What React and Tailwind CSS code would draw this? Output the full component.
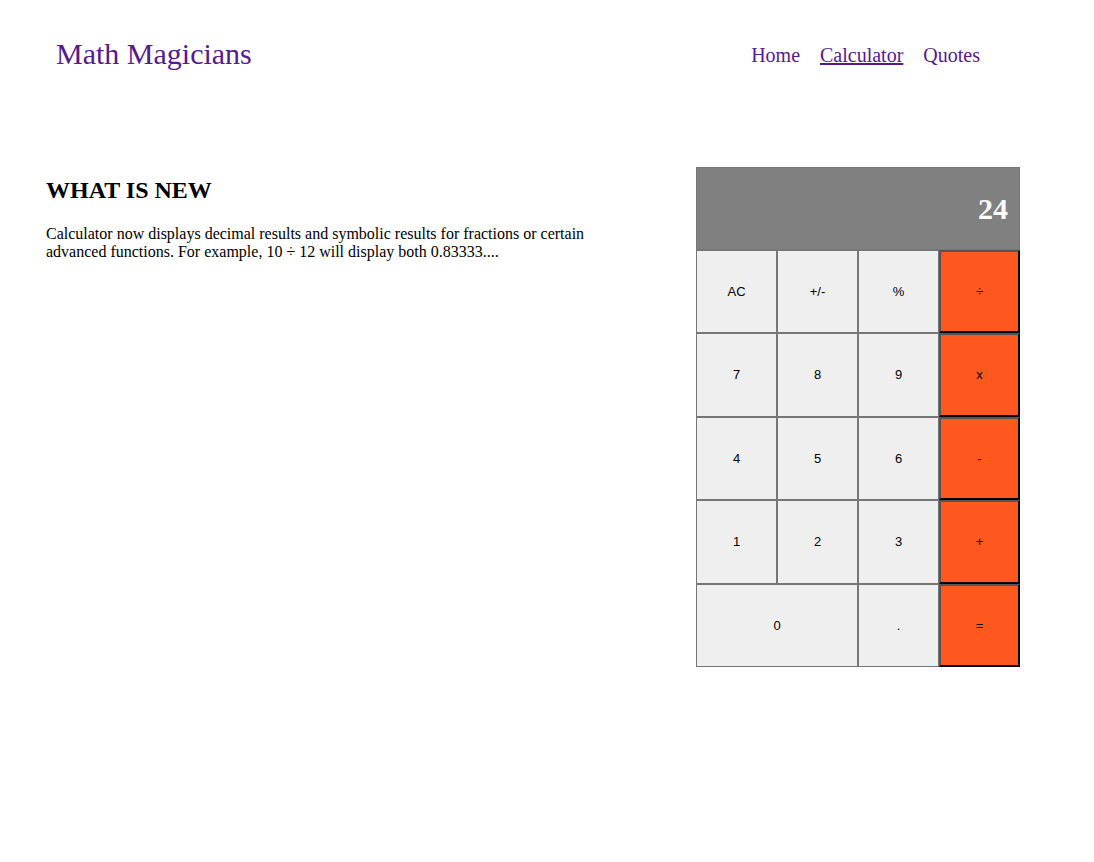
const keys = [
  { label: 'AC' },
  { label: '+/-' },
  { label: '%' },
  { label: '÷', op: true },
  { label: '7' },
  { label: '8' },
  { label: '9' },
  { label: 'x', op: true },
  { label: '4' },
  { label: '5' },
  { label: '6' },
  { label: '-', op: true },
  { label: '1' },
  { label: '2' },
  { label: '3' },
  { label: '+', op: true },
  { label: '0', wide: true },
  { label: '.' },
  { label: '=', op: true },
]

function Key({ label, op, wide }) {
  const base = 'flex items-center justify-center text-[13px] text-black font-["Liberation_Sans",Arial,sans-serif]'
  if (op) {
    return (
      <button className={`${base} bg-[#ff581f] border-2 border-t-[#555] border-l-[#555] border-r-black border-b-black`}>
        {label}
      </button>
    )
  }
  return (
    <button className={`${base} bg-[#efefef] border border-[#767676] ${wide ? 'col-span-2' : ''}`}>
      {label}
    </button>
  )
}

function Calculator() {
  return (
    <div className="w-[324px] flex-none">
      <div className="flex h-[83px] items-center justify-end border border-[#777] bg-[#808080] pr-[11px]">
        <span className="text-[30px] font-bold text-white">24</span>
      </div>
      <div className="grid h-[417px] grid-cols-4 grid-rows-5">
        {keys.map((k) => (
          <Key key={k.label} {...k} />
        ))}
      </div>
    </div>
  )
}

export default function App() {
  return (
    <div className="min-h-[862px] bg-white font-['Liberation_Serif','Times_New_Roman',serif] text-black">
      <header className="flex items-center justify-between pl-[56px] pr-[114px] pt-[37px]">
        <h1 className="text-[30px] leading-[34px] text-[#551a8b]">Math Magicians</h1>
        <nav className="mt-[2px] flex gap-5 text-[20px] text-[#551a8b]">
          <a href="#home">Home</a>
          <a href="#calculator" className="underline">Calculator</a>
          <a href="#quotes">Quotes</a>
        </nav>
      </header>

      <main className="flex justify-between pl-[46px] pr-[74px] pt-[96px]">
        <section className="w-[545px] pt-[10px]">
          <h2 className="text-[24px] font-bold leading-[27px]">WHAT IS NEW</h2>
          <p className="mt-[21px] text-[16px] leading-[18px]">
            Calculator now displays decimal results and symbolic results for fractions or certain advanced functions. For example, 10 ÷ 12 will display both 0.83333....
          </p>
        </section>
        <Calculator />
      </main>
    </div>
  )
}
